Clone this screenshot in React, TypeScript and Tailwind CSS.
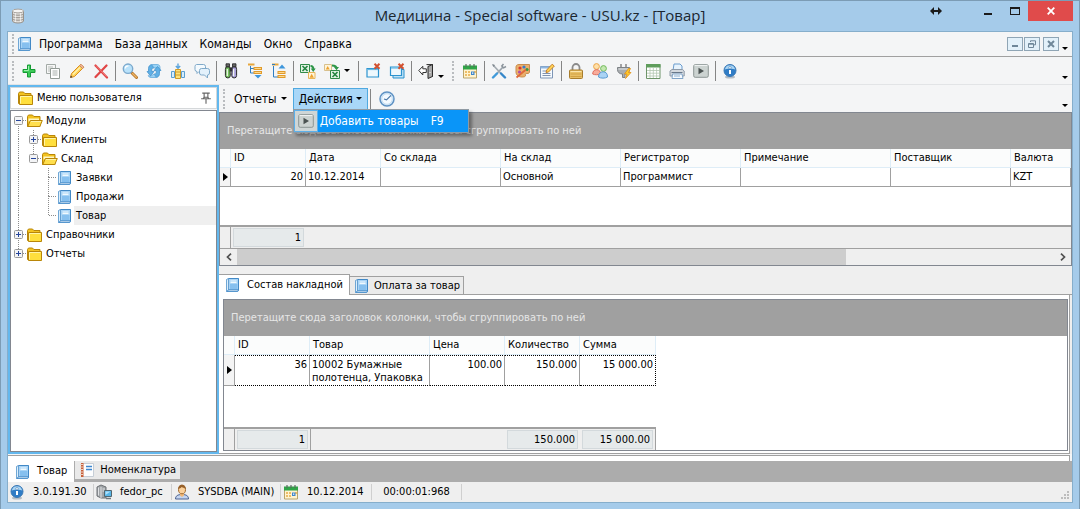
import type { ReactNode } from "react";

const titleFont = 'font-["Open_Sans","Noto_Sans",sans-serif]';
const gridFont = 'font-["DejaVu_Sans_Condensed","Noto_Sans",sans-serif]';

function Icon({ children, size = "size-4" }: { children: ReactNode; size?: string }) {
  return (
    <svg viewBox="0 0 16 16" className={`${size} shrink-0`} fill="none" aria-hidden="true">
      {children}
    </svg>
  );
}

const DatabaseIcon = () => (
  <Icon>
    <path d="M2.500 3v10c0 1 2.500 2 5.500 2s5.500-1 5.500-2V3z" fill="#dedbd7" stroke="#97928c" />
    <ellipse cx="8" cy="3" rx="5.500" ry="1.900" fill="#f6f4f2" stroke="#a8a49f" />
    <path d="M2.500 6c1 1.600 10 1.600 11 0M2.500 8.500c1 1.600 10 1.600 11 0M2.500 11c1 1.600 10 1.600 11 0" stroke="#97928c" />
    <path d="M5.500 5v9M10.500 5v9" stroke="#fff" opacity=".6" />
  </Icon>
);

const BookIcon = () => (
  <Icon>
    <path d="M3 1.500h11v12L12.500 15H1.500V2.500z" fill="#5b9fda" />
    <path d="M3.500 1.500h10v11.500h-10z" fill="#a9d4f6" stroke="#4289c6" />
    <path d="M1.500 2.500l2-1v11.500l-2 1.500z" fill="#dceffc" stroke="#5a98cd" strokeWidth=".8" />
    <path d="M2 14.500l1.500-1.500h10l-1 1.500z" fill="#f2f9fe" stroke="#4289c6" strokeWidth=".8" />
    <path d="M5.500 4h6M5.500 5.500h6" stroke="#f0f9fe" />
    <path d="M5 7h7.500v5H5z" fill="#86c0ef" />
  </Icon>
);

const PlusIcon = () => (
  <Icon>
    <path d="M6.500 2h3v4.500H14v3H9.500V14h-3V9.500H2v-3h4.500z" fill="#3ccb58" stroke="#149a33" strokeLinejoin="round" />
    <path d="M7.500 3v4.500H3" stroke="#9cf0ab" />
  </Icon>
);

const CopyIcon = () => (
  <Icon>
    <path d="M1.500 1.500h9v9h-9z" fill="#f6f6f6" stroke="#a3aaa6" />
    <path d="M3 4h5M3 6h2M3 8h2" stroke="#b7bdb9" />
    <path d="M5.500 5.500h9v10h-9z" fill="#fff" stroke="#929a95" />
    <path d="M7.500 8h5M7.500 10h5M7.500 12h5" stroke="#a8afab" />
  </Icon>
);

const PencilIcon = () => (
  <Icon>
    <path d="M1.500 14.500l1-4L11.500 1.500l3 3L5.500 13.500z" fill="#fcd45a" stroke="#dc8c1f" strokeLinejoin="round" />
    <path d="M10.500 2.500l1.500-1.300 3 3-1.500 1.300z" fill="#f0b8a0" stroke="#cf8e5c" />
    <path d="M4 11.500l7-7" stroke="#fff2b0" strokeWidth="1.200" />
    <path d="M1.200 14.800l.6-2.300 1.700 1.700z" fill="#3a3a3a" />
  </Icon>
);

const DeleteIcon = () => (
  <Icon>
    <path d="M2.500 2.500l11.500 12M13.500 2.500l-11 11.500" stroke="#e04545" strokeWidth="2.200" strokeLinecap="round" />
    <path d="M3 2.500l10.500 11" stroke="#f79090" strokeWidth=".7" />
  </Icon>
);

const SearchIcon = () => (
  <Icon>
    <path d="M10 10l4.500 4.500" stroke="#b5762d" strokeWidth="3" strokeLinecap="round" />
    <path d="M10.500 10.500l3.800 3.800" stroke="#efb564" strokeWidth="1.300" strokeLinecap="round" />
    <circle cx="6" cy="5.700" r="4.700" fill="#b9e2fb" stroke="#7ba9cd" strokeWidth="1.400" />
    <path d="M3.300 5.500c0-2 1.500-2.700 3.200-2.700" stroke="#fff" strokeWidth="1.300" />
  </Icon>
);

const RefreshIcon = () => (
  <Icon>
    <path d="M1 8.500l3.500 4.500L8 8.500H5.800V6.500c0-1 .7-1.500 2.200-1.500L5.500 1.500C3.500 2 2.500 3.500 2.500 5.500v3z" fill="#5fb0e6" stroke="#3c8dc8" strokeWidth=".7" />
    <path d="M6 1.500h5c2 0 3 1 3 3V7l-3-.5V5H8z" fill="#9ad3f5" stroke="#5aa4d8" strokeWidth=".7" />
    <path d="M15 7.500L11.500 3.500 8 7.500h2.200v2c0 1-.7 1.500-2.200 1.500l2.500 3.500c2-.5 3-2 3-4v-3z" fill="#5fb0e6" stroke="#3c8dc8" strokeWidth=".7" />
    <path d="M10 14.500H5c-1.500 0-2.500-.8-2.800-2l2.300.8L8 11z" fill="#9ad3f5" stroke="#5aa4d8" strokeWidth=".7" />
  </Icon>
);

const AlignIcon = () => (
  <Icon>
    <path d="M8 .5v5M5.800 3L8 5.200 10.200 3" stroke="#5aa4dc" strokeWidth="1.400" />
    <path d="M1.500 8.500h3v6h-3zM11.500 8.500h3v6h-3z" fill="#d6ecfb" stroke="#5a9fd1" />
    <path d="M5.500 6.500h5v9h-5z" fill="#ffe27a" stroke="#cf9b28" />
    <path d="M5.500 9h5M5.500 12h5" stroke="#cf9b28" />
  </Icon>
);

const ChatIcon = () => (
  <Icon>
    <path d="M2.500 1.500h7a2 2 0 0 1 2 2v3a2 2 0 0 1-2 2H5l-2 2v-2a2 2 0 0 1-2-2v-3a2 2 0 0 1 1.500-2z" fill="#f4fafe" stroke="#7fa9c9" />
    <path d="M7.500 5.500h6a2 2 0 0 1 2 2v2.500a2 2 0 0 1-2 2v3l-3-3h-3a2 2 0 0 1-2-2V7.500a2 2 0 0 1 2-2z" fill="#e3f1fb" stroke="#7fa9c9" />
  </Icon>
);

const BinocularsIcon = () => (
  <Icon>
    <path d="M3 .8h3.500v3H3zM9.500 .8H13v3H9.500z" fill="#666" stroke="#222" strokeWidth=".8" />
    <path d="M5 4.500h6v4H5z" fill="#333" />
    <path d="M3 4h3.800l.5 8.500a2.400 2.400 0 0 1-4.900 0V6.500z" fill="#74c05e" stroke="#2b2b2b" />
    <path d="M13 4H9.200l-.5 8.500a2.400 2.400 0 0 0 4.900 0V6.500z" fill="#a9a0dc" stroke="#2b2b2b" />
    <path d="M4.300 6v7M10.600 6v7" stroke="#f2f8ef" strokeWidth="1.200" />
  </Icon>
);

const TreeLines = ({ up = false }: { up?: boolean }) => (
  <Icon>
    <path d="M1 1.500h6.500" stroke="#e7a63c" strokeWidth="2" />
    {up ? (
      <>
        <path d="M2.500 3v11H7M1 1.500h3" stroke="#2f7fc4" />
        <path d="M6.500 9.500h8M6.500 13.500h8" stroke="#e09b2c" strokeWidth="3" />
        <path d="M7.500 9.500h6M7.500 13.500h6" stroke="#ffd98c" />
        <path d="M11 1.500l3.500 4h-7z" fill="#3f97dc" />
      </>
    ) : (
      <>
        <path d="M3.500 3v7H7M3.500 5.500H7" stroke="#2f7fc4" />
        <path d="M6.500 5.500h8.500M6.500 9.500h8.500" stroke="#e09b2c" strokeWidth="3" />
        <path d="M7.500 5.500h6.500M7.500 9.500h6.500" stroke="#ffd98c" />
        <path d="M11 15.500l3.500-3.500h-7z" fill="#3f97dc" />
      </>
    )}
  </Icon>
);

const ExcelOutIcon = () => (
  <Icon>
    <path d="M.5 1.500h9v8h-9z" fill="#e3f3e5" stroke="#318a48" />
    <path d="M2.500 3l5 5M7.500 3l-5 5" stroke="#258541" strokeWidth="1.600" />
    <path d="M10.500 3c2 0 3 .8 3 4" stroke="#2e9648" strokeWidth="2" />
    <path d="M10.700 5.500h5L13.200 9z" fill="#2e9648" />
    <path d="M8.500 9.500h6.500v6H8.500z" fill="#fff4da" stroke="#e8b65a" />
    <path d="M9.500 14.800l2.200-4 2.200 4z" fill="#eda32e" />
  </Icon>
);

const ExcelInIcon = () => (
  <Icon>
    <path d="M.5 1.500h7v6h-7z" fill="#fff4da" stroke="#d8c08c" />
    <path d="M1.700 6.500l2-3.500 2 3.500z" fill="#eda32e" />
    <path d="M8 2.500c2.800 0 4.500.8 4.500 3" stroke="#2e9648" strokeWidth="2" />
    <path d="M10 4h5l-2.500 3.200z" fill="#2e9648" />
    <path d="M6.500 7.500h9v8h-9z" fill="#e3f3e5" stroke="#318a48" />
    <path d="M8.500 9l5 5M13.500 9l-5 5" stroke="#258541" strokeWidth="1.600" />
  </Icon>
);

const CloseWindowIcon = ({ stacked = false }: { stacked?: boolean }) => (
  <Icon>
    {stacked && <path d="M4 6.500h11v8.500H4z" fill="#bfe2f6" stroke="#2b93cf" />}
    <path d={stacked ? "M1.500 4h11v8.500h-11z" : "M2 5.500h11.500v8.500H2z"} fill="#eef8fd" stroke="#2b93cf" strokeWidth="1.200" />
    <path d={stacked ? "M2 5h10" : "M2.500 6.500H13"} stroke="#65b9e6" strokeWidth="1.200" />
    <path d="M9.500.8l5 5M14.500.8l-5 5" stroke="#d2502f" strokeWidth="2" />
  </Icon>
);

const ExitIcon = () => (
  <Icon>
    <path d="M8.500 1.500h6v12h-3" fill="#ddd" stroke="#3b3b3b" />
    <path d="M10 3.500l4.500-2v12l-4.500 2z" fill="#a8a8a8" stroke="#2b2b2b" />
    <path d="M.8 7.500l4-4.200v2.500h3.500v3.700H4.800v2.500z" fill="#fff" stroke="#333" />
    <path d="M12 9v1" stroke="#fff" />
  </Icon>
);

const CalendarIcon = () => (
  <Icon>
    <path d="M1.500 3.500h13v11.500h-13z" fill="#fff3cf" stroke="#b9a46a" />
    <path d="M1 2.500h14v4H1z" fill="#2fa447" />
    <path d="M4 1v3M8 1v3M12 1v3" stroke="#5d6a60" strokeWidth="1.200" />
    <path d="M3 8h2v2H3zM6 8h2v2H6zM3 11h2v2H3zM6 11h2v2H6zM12 8h2v2h-2z" fill="#edbd67" />
    <path d="M9 8.500h3.500v3.500H9z" fill="#3f86cc" />
    <path d="M10 9.500h1.300v1.300H10z" fill="#fff" />
  </Icon>
);

const ToolsIcon = () => (
  <Icon>
    <path d="M12 4l-7 7.500" stroke="#9aa3ab" strokeWidth="1.800" />
    <path d="M12.500 1L10.800 3l1.800 1.800L15 3.500" stroke="#8b949c" strokeWidth="1.500" />
    <path d="M2 2l8 8.500" stroke="#a2a9af" strokeWidth="1.600" />
    <path d="M1 1l3 1-1.500 2z" fill="#7f878e" />
    <path d="M10 10.500l4 4" stroke="#3587c9" strokeWidth="2.400" strokeLinecap="round" />
    <path d="M6 10.500l-4 4" stroke="#3f9ada" strokeWidth="2.400" strokeLinecap="round" />
  </Icon>
);

const PaletteIcon = () => (
  <Icon>
    <path d="M1 4c0-1.500 1-2.500 3-2.500h10.500V9c0 1-1 1.500-2.500 1.500s-2 .5-1.500 1.700c.4 1.200-1 1.800-3.500 1.800C3.500 14 1 12 1 9z" fill="#eab06c" stroke="#c98d4e" />
    <circle cx="5" cy="5" r="1.600" fill="#d8392f" />
    <circle cx="9" cy="4" r="1.600" fill="#3a79c9" />
    <circle cx="12" cy="6.500" r="1.600" fill="#2d9a46" />
    <circle cx="4.500" cy="9" r="1.600" fill="#b04fa8" />
    <path d="M1.500 14.500l9.500-8" stroke="#e0683a" strokeWidth="1.800" />
  </Icon>
);

const NoteEditIcon = () => (
  <Icon>
    <path d="M1.500 3.500h12v11.500h-12z" fill="#f5fafe" stroke="#7d95b5" />
    <path d="M1.500 3.500h12v2h-12z" fill="#8fb6e0" />
    <path d="M3.500 8h5M3.500 10.500h8M3.500 12.500h8" stroke="#8093b0" />
    <path d="M7 9.500l.7-2.500L13.200 1.200l2.100 1.900L9.500 9z" fill="#ffd255" stroke="#c7812a" />
  </Icon>
);

const LockIcon = () => (
  <Icon>
    <path d="M4.500 7.500V4.500a3.500 3.500 0 0 1 7 0v3" stroke="#8b8b8b" strokeWidth="1.800" />
    <rect x="1.500" y="7" width="13" height="8.500" rx="1" fill="#e8c067" stroke="#a87d2d" />
    <path d="M2.500 8.500h11" stroke="#fbe6ae" />
    <path d="M2.500 11h11M2.500 13.500h11" stroke="#d2a244" />
  </Icon>
);

const UsersIcon = () => (
  <Icon>
    <circle cx="4.500" cy="3.500" r="2.900" fill="#ffe0a8" stroke="#eaa64c" />
    <path d="M.7 11c0-2.800 1.500-4.300 4-4.300s3.800 1.500 3.800 4.300c-2 1-6 1-7.800 0z" fill="#f8ac9b" stroke="#df7060" />
    <circle cx="11.500" cy="5.500" r="2.900" fill="#c4e8b0" stroke="#71ba5c" />
    <path d="M6.500 14c0-3.500 2-5.200 4.700-5.200s4.300 1.700 4.300 5.200c-2 1.500-7 1.500-9 0z" fill="#aad3f4" stroke="#5b9bd2" />
  </Icon>
);

const PlugIcon = () => (
  <Icon>
    <path d="M5 1v4M10 1v4" stroke="#8e8e8e" strokeWidth="1.600" />
    <path d="M1.500 4.500h12v2c0 2.800-2 4.500-4.500 4.500V14.500H6.500V11c-3 0-5-1.700-5-4.500z" fill="#a9adb0" stroke="#7d8286" />
    <path d="M2.500 6h10" stroke="#e2e4e5" />
    <path d="M12.500 5.500l-4 5.500h2.500l-1.500 4.500 5.500-6h-2.500l2-4z" fill="#ffc928" stroke="#e08e17" strokeWidth=".8" />
  </Icon>
);

const SheetIcon = () => (
  <Icon>
    <path d="M1.500 1.500h13.500v14H1.500z" fill="#fff" stroke="#6d9468" />
    <path d="M1 1h14.500v3.500H1z" fill="#5f9d5c" />
    <path d="M2 7.500h13M2 10.200h13M2 13h13M5 5v10M8.300 5v10M11.600 5v10" stroke="#b3c6b0" strokeWidth=".8" />
  </Icon>
);

const PrinterIcon = () => (
  <Icon>
    <path d="M4 7.500L5 1h6l2 2v4.500z" fill="#e7f3fd" stroke="#6b9cce" />
    <path d="M1 8l2-1.500h10.500L15.200 8v5H1z" fill="#d4d9df" stroke="#8e9aa8" />
    <path d="M2.500 9.500h11" stroke="#68788a" />
    <path d="M3.500 11h9.500l1 4.500h-11z" fill="#f7fbff" stroke="#82a5c8" />
    <path d="M5 13h6" stroke="#8fb0d0" />
  </Icon>
);

const PlayIcon = () => (
  <Icon>
    <rect x=".7" y="1.700" width="14.600" height="12.600" rx="1.500" fill="#ccd3d1" stroke="#8c9694" />
    <path d="M1.500 2.500h13" stroke="#eef1f1" />
    <path d="M5.500 4.700L11 8l-5.500 3.300z" fill="#4b5352" />
  </Icon>
);

const InfoIcon = () => (
  <Icon>
    <ellipse cx="8" cy="14" rx="5" ry="1.500" fill="#b3bcc5" />
    <circle cx="8" cy="7.500" r="6" fill="#2f7cc6" stroke="#3a78b4" />
    <path d="M2.800 6.500a5.300 5.300 0 0 1 10.400 0c-1.500-1-9-1-10.400 0z" fill="#a9d4f3" />
    <circle cx="8" cy="4.700" r="1.200" fill="#fff" stroke="#2a6aa8" strokeWidth=".5" />
    <path d="M7 7h2v4H7z" fill="#fff" />
  </Icon>
);

const ClockIcon = () => (
  <Icon>
    <circle cx="8" cy="8" r="7" fill="#dceefb" stroke="#5f92c4" strokeWidth="1.500" />
    <circle cx="8" cy="8" r="5.300" fill="#f4faff" stroke="#b9d6ee" strokeWidth=".8" />
    <path d="M12 4.300L7.500 8.800 5 8" stroke="#4a79a8" strokeWidth="1.200" />
  </Icon>
);

const FolderIcon = ({ open = false }: { open?: boolean }) => (
  <Icon>
    <path d="M.5 3.500l1-1.500h4l1.300 1.500h6.200v10H.5z" fill="#f3c31f" stroke="#b98609" />
    {open ? (
      <>
        <path d="M1.500 5.500H12v3H1.500z" fill="#fff6c4" />
        <path d="M.8 13.500l2.500-6h12l-2.500 6z" fill="#ffdf4d" stroke="#b98609" strokeLinejoin="round" />
        <path d="M4 8.500h10" stroke="#fff3a6" />
      </>
    ) : (
      <>
        <path d="M1.500 14.500V5.500h13v9z" fill="#ffdf3d" stroke="#b98609" />
        <path d="M2.500 6.500h11M2.500 6.500v7" stroke="#fff5a8" />
      </>
    )}
  </Icon>
);

const NotebookIcon = () => (
  <Icon>
    <path d="M2.500 1.500h12v13h-12z" fill="#fcfdfe" stroke="#c6ced7" />
    <path d="M2 1h2.500v14H2z" fill="#c8603a" />
    <path d="M1 2.500h3M1 5h3M1 7.500h3M1 10h3M1 12.500h3" stroke="#ecd3c6" />
    <path d="M7 4.500h6M7 7.500h6" stroke="#3c87cf" strokeWidth="1.600" />
  </Icon>
);

const ServerIcon = () => (
  <Icon>
    <path d="M1 3l4-2 5 2v11H5l-4-2z" fill="#a1a5a8" stroke="#6d7174" />
    <path d="M5 3v11M6.500 5h2.500M6.500 7h2.500M2.500 3.500v8" stroke="#e0e2e4" />
    <path d="M8.500 6.500h7v6h-7z" fill="#57b6e8" stroke="#52666f" />
    <path d="M9.500 7.500h5L9.500 11z" fill="#aee0fa" />
    <path d="M10 14.500h5" stroke="#6d7a80" strokeWidth="1.500" />
  </Icon>
);

const UserIcon = () => (
  <Icon>
    <path d="M1.500 15c0-3 2-4.500 6.500-4.500s6.500 1.500 6.500 4.500z" fill="#c3d4f0" stroke="#4d6391" />
    <path d="M6 9.500h4v2l-2 1.500-2-1.500z" fill="#f0b778" />
    <ellipse cx="8" cy="5.500" rx="3.500" ry="4.300" fill="#fbd09a" stroke="#a06a30" />
    <path d="M4.300 5c0-6 7.500-5.500 7.400 0-1.500-1-3-1.500-4-2-1 1-2 1.500-3.400 2z" fill="#96602a" />
  </Icon>
);

const PinIcon = () => (
  <Icon size="size-3">
    <path d="M3 1.500h10M5.500 2v6M10.500 2v6M1.500 9h13M4.500 8.500l1-1.500h5l1 1.500M8 9v6.500" stroke="#666" strokeWidth="1.500" />
  </Icon>
);

const Caret = () => (
  <svg viewBox="0 0 6 3" className="h-[3px] w-1.5 shrink-0" aria-hidden="true">
    <path d="M0 0h6L3 3z" fill="#000" />
  </svg>
);

const Grip = () => <span className="h-5 w-0.5 shrink-0 border-l-2 border-dotted border-[#b9bcbf]" />;

const Separator = () => (
  <span className="flex h-5 w-[5px] shrink-0 justify-center">
    <span className="w-px bg-[#858585]" />
  </span>
);

type Tool = { label: string; icon: ReactNode };

const toolGroups: Tool[][] = [
  [
    { label: "Добавить", icon: <PlusIcon /> },
    { label: "Копировать", icon: <CopyIcon /> },
    { label: "Изменить", icon: <PencilIcon /> },
    { label: "Удалить", icon: <DeleteIcon /> },
  ],
  [
    { label: "Поиск", icon: <SearchIcon /> },
    { label: "Обновить", icon: <RefreshIcon /> },
    { label: "Ширина колонок", icon: <AlignIcon /> },
    { label: "Сообщения", icon: <ChatIcon /> },
  ],
  [
    { label: "Найти", icon: <BinocularsIcon /> },
    { label: "Развернуть", icon: <TreeLines /> },
    { label: "Свернуть", icon: <TreeLines up /> },
  ],
];

const settingsGroups: Tool[][] = [
  [{ label: "Календарь", icon: <CalendarIcon /> }],
  [
    { label: "Настройки", icon: <ToolsIcon /> },
    { label: "Оформление", icon: <PaletteIcon /> },
    { label: "Заметки", icon: <NoteEditIcon /> },
  ],
  [
    { label: "Блокировка", icon: <LockIcon /> },
    { label: "Пользователи", icon: <UsersIcon /> },
    { label: "Подключение", icon: <PlugIcon /> },
  ],
  [
    { label: "Таблица", icon: <SheetIcon /> },
    { label: "Печать", icon: <PrinterIcon /> },
    { label: "Запуск", icon: <PlayIcon /> },
  ],
  [{ label: "О программе", icon: <InfoIcon /> }],
];

const ToolButton = ({ label, icon }: Tool) => (
  <button type="button" aria-label={label} className="flex size-6 shrink-0 items-center justify-center">
    {icon}
  </button>
);

const ToolGroups = ({ groups }: { groups: Tool[][] }) => (
  <>
    {groups.map((group, i) => (
      <div key={group[0].label} className="flex items-center">
        {i > 0 && <Separator />}
        {group.map((tool) => (
          <ToolButton key={tool.label} {...tool} />
        ))}
      </div>
    ))}
  </>
);

function TitleBar() {
  return (
    <header className="grid h-[30px] grid-cols-[1fr_auto_1fr]">
      <div className="flex items-center pl-[3px]">
        <DatabaseIcon />
      </div>
      <h1 className={`${titleFont} text-[15px] leading-[29px] text-[#1c2730]`}>
        Медицина - Special software - USU.kz - [Товар]
      </h1>
      <div className="flex items-start justify-end">
        <button type="button" aria-label="Переместить" className="mr-6 flex h-5 w-[30px] items-center justify-center">
          <svg viewBox="0 0 12 8" className="h-2 w-3">
            <path d="M0 4l4-4v3h4V0l4 4-4 4V5H4v3z" fill="#1b1b1b" />
          </svg>
        </button>
        <button type="button" aria-label="Свернуть окно" className="flex h-5 w-[26px] items-center justify-center pt-1.5">
          <span className="h-0.5 w-2 bg-[#1b1b1b]" />
        </button>
        <button type="button" aria-label="Развернуть окно" className="flex h-5 w-[27px] items-center justify-center">
          <span className="h-2 w-2.5 border border-t-2 border-[#1b1b1b]" />
        </button>
        <button type="button" aria-label="Закрыть окно" className="flex h-5 w-[45px] items-center justify-center bg-[#e04b4b]">
          <svg viewBox="0 0 8 8" className="size-2">
            <path d="M.7.7l6.600 6.600M7.300.7L.7 7.300" stroke="#fff" strokeWidth="1.800" />
          </svg>
        </button>
      </div>
    </header>
  );
}

const mdiButton = "flex h-3.5 w-4 items-center justify-center border border-[#8fa5b5] bg-[#e3f1fa]";

function MenuBar() {
  return (
    <nav className="flex h-[25px] items-center border-b border-[#a0a0a0] pl-1">
      <Grip />
      <span className="ml-[3px]">
        <BookIcon />
      </span>
      {["Программа", "База данных", "Команды", "Окно", "Справка"].map((item) => (
        <button key={item} type="button" className={`${gridFont} px-1.5 text-xs text-black`}>
          {item}
        </button>
      ))}
      <div className="ml-auto flex items-center pr-1">
        <button type="button" aria-label="Свернуть" className={mdiButton}>
          <span className="mt-1 h-0.5 w-1.5 bg-[#6f8799]" />
        </button>
        <button type="button" aria-label="Восстановить" className={`${mdiButton} ml-px`}>
          <svg viewBox="0 0 8 8" className="size-2" fill="none" stroke="#6f8799">
            <path d="M2.500 2V.8h5v4H6M.5 3.500h5v4h-5zM.5 4.200h5" />
          </svg>
        </button>
        <button type="button" aria-label="Закрыть" className={`${mdiButton} ml-[3px] mr-[3px]`}>
          <svg viewBox="0 0 8 8" className="size-2">
            <path d="M1 1l6 6M7 1L1 7" stroke="#6f8799" strokeWidth="2" />
          </svg>
        </button>
        <span className="pt-2">
          <Caret />
        </span>
      </div>
    </nav>
  );
}

function ToolBar() {
  return (
    <div className="flex h-7 items-center border-b border-[#e2e4e6] pl-1">
      <Grip />
      <div className="flex items-center pl-[3px]">
        <ToolGroups groups={toolGroups} />
        <Separator />
        <ToolButton label="Экспорт" icon={<ExcelOutIcon />} />
        <ToolButton label="Импорт" icon={<ExcelInIcon />} />
        <button type="button" aria-label="Варианты импорта" className="flex h-6 w-3 items-center">
          <Caret />
        </button>
        <Separator />
        <ToolButton label="Закрыть вкладку" icon={<CloseWindowIcon />} />
        <ToolButton label="Закрыть все вкладки" icon={<CloseWindowIcon stacked />} />
        <Separator />
        <ToolButton label="Выход" icon={<ExitIcon />} />
        <span className="pr-2 pt-3">
          <Caret />
        </span>
        <Grip />
        <span className="w-1" />
        <ToolGroups groups={settingsGroups} />
      </div>
      <span className="ml-auto pr-1 pt-3.5">
        <Caret />
      </span>
    </div>
  );
}

type Cell = "line" | "blank" | "tee" | "elbow" | "plus" | "plus-end" | "minus-root" | "minus-end";

function TreeCell({ kind }: { kind: Cell }) {
  const expander = kind.startsWith("plus") || kind.startsWith("minus");
  const above = !["blank", "minus-root"].includes(kind);
  const below = !["blank", "elbow", "plus-end", "minus-end"].includes(kind);
  return (
    <svg viewBox="0 0 15 19" className="h-[19px] w-[15px] shrink-0" fill="none" aria-hidden="true">
      {above && <path d="M7.500 0v9.500" stroke="#8c8c8c" strokeDasharray="1 1" />}
      {below && <path d="M7.500 9v10" stroke="#8c8c8c" strokeDasharray="1 1" />}
      {kind !== "line" && kind !== "blank" && <path d="M8 9.500h7" stroke="#8c8c8c" strokeDasharray="1 1" />}
      {expander && (
        <>
          <rect x="3.500" y="5.500" width="8" height="8" rx="1" fill="#f3f4f6" stroke="#9a9a9a" />
          <path d={kind.startsWith("plus") ? "M5 9.500h5M7.500 7v5" : "M5 9.500h5"} stroke="#25459c" />
        </>
      )}
    </svg>
  );
}

const treeRows: { label: string; cells: Cell[]; icon: "open" | "closed" | "book"; selected?: boolean }[] = [
  { label: "Модули", cells: ["minus-root"], icon: "open" },
  { label: "Клиенты", cells: ["line", "plus"], icon: "closed" },
  { label: "Склад", cells: ["line", "minus-end"], icon: "open" },
  { label: "Заявки", cells: ["line", "blank", "tee"], icon: "book" },
  { label: "Продажи", cells: ["line", "blank", "tee"], icon: "book" },
  { label: "Товар", cells: ["line", "blank", "elbow"], icon: "book", selected: true },
  { label: "Справочники", cells: ["plus"], icon: "closed" },
  { label: "Отчеты", cells: ["plus-end"], icon: "closed" },
];

function SidePanel() {
  return (
    <aside className="flex w-[211px] shrink-0 flex-col border-2 border-[#63b8ee] bg-[#f4f5f7]">
      <div className="mb-px flex h-[22px] items-center border border-[#d5d8da] bg-white pl-[7px] pr-1">
        <FolderIcon />
        <h2 className={`${gridFont} ml-[3px] flex-1 text-[11px]`}>Меню пользователя</h2>
        <button type="button" aria-label="Закрепить панель">
          <PinIcon />
        </button>
      </div>
      <ul role="tree" className="flex-1 border border-[#828790] bg-white">
        {treeRows.map((row) => (
          <li key={row.label} role="treeitem" aria-level={row.cells.length} aria-selected={!!row.selected}>
            <button type="button" className="flex h-[19px] w-full items-center text-left">
              {row.cells.map((cell, i) => (
                <TreeCell key={i} kind={cell} />
              ))}
              <span className="mx-px">{row.icon === "book" ? <BookIcon /> : <FolderIcon open={row.icon === "open"} />}</span>
              <span
                className={`${gridFont} flex-1 pl-0.5 text-[11px] leading-[19px] ${row.selected ? "bg-[#efefef]" : ""}`}
              >
                {row.label}
              </span>
            </button>
          </li>
        ))}
      </ul>
    </aside>
  );
}

function ActionBar() {
  return (
    <div className="flex h-[27px] items-center bg-[#f4f5f6] pl-1">
      <Grip />
      <button type="button" className={`${gridFont} ml-[3px] flex h-[22px] items-center gap-1 px-1.5 text-xs`}>
        Отчеты
        <Caret />
      </button>
      <div className="relative">
        <button
          type="button"
          aria-expanded="true"
          className={`${gridFont} flex h-[22px] items-center gap-[3px] border border-[#4fa9e0] bg-[#a9d7f8] px-[5px] text-xs`}
        >
          Действия
          <Caret />
        </button>
        <div
          role="menu"
          className="absolute left-0 top-[21px] z-10 border border-[#8f9aa3] bg-[#f4f5f6] shadow-[3px_3px_3px_rgba(0,0,0,0.35)]"
        >
          <button
            type="button"
            role="menuitem"
            className={`${gridFont} flex h-[22px] items-center whitespace-nowrap bg-[#0a95f8] pr-6 text-xs text-white`}
          >
            <span className="mr-0.5 flex h-[22px] w-6 items-center justify-center border border-[#5cb0ea] bg-[#cfd6d6]">
              <PlayIcon />
            </span>
            Добавить товары
            <kbd className={`${gridFont} ml-3`}>F9</kbd>
          </button>
        </div>
      </div>
      <Separator />
      <span className="pl-0.5">
        <ToolButton label="Время" icon={<ClockIcon />} />
      </span>
      <span className="ml-auto pr-1 pt-3.5">
        <Caret />
      </span>
    </div>
  );
}

const GroupBar = () => (
  <div className={`${gridFont} flex h-9 shrink-0 items-center bg-[#a0a0a0] pl-[7px] text-[11px] text-[#e6e6e6]`}>
    Перетащите сюда заголовок колонки, чтобы сгруппировать по ней
  </div>
);

const RowMarker = () => (
  <svg viewBox="0 0 5 8" className="mx-auto h-2 w-[5px]" role="img" aria-label="Текущая строка">
    <path d="M0 0l5 4-5 4z" fill="#000" />
  </svg>
);

const headCell = "h-[19px] border-b border-r border-[#deedf7] bg-[#fbfcfc] p-0 pl-[3px] text-left font-normal";
const bodyCell = "h-[19px] border-b border-r border-[#a0a0a0] p-0 px-0.5";
const footCell = "h-[23px] border-t-2 border-[#a0a0a0] bg-[#efefef] p-0";

const FooterValue = ({ children }: { children: ReactNode }) => (
  <div className="mx-0.5 h-[19px] border border-[#d3d9dc] bg-[#e6eaeb] pr-0.5 text-right leading-[17px]">{children}</div>
);

const receiptColumns = ["ID", "Дата", "Со склада", "На склад", "Регистратор", "Примечание", "Поставщик", "Валюта"];
const receiptRow = ["20", "10.12.2014", "", "Основной", "Программист", "", "", "KZT"];

function ReceiptsGrid() {
  return (
    <section className="border border-[#828790] bg-white">
      <GroupBar />
      <table className={`${gridFont} w-full table-fixed border-separate border-spacing-0 text-[11px] leading-[18px]`}>
        <colgroup>
          <col className="w-[11px]" />
          <col className="w-[75px]" />
          <col className="w-[75px]" />
          <col className="w-[120px]" />
          <col className="w-[120px]" />
          <col className="w-[120px]" />
          <col className="w-[150px]" />
          <col className="w-[120px]" />
          <col />
        </colgroup>
        <thead>
          <tr>
            <td className={headCell} />
            {receiptColumns.map((c) => (
              <th key={c} scope="col" className={headCell}>
                {c}
              </th>
            ))}
          </tr>
        </thead>
        <tbody>
          <tr>
            <td className={`${bodyCell} bg-[#f4f4f4]`}>
              <RowMarker />
            </td>
            {receiptRow.map((value, i) => (
              <td key={receiptColumns[i]} className={`${bodyCell} ${i === 0 ? "text-right" : ""}`}>
                {value}
              </td>
            ))}
          </tr>
          <tr>
            <td colSpan={9} className="h-[38px] p-0" />
          </tr>
        </tbody>
        <tfoot>
          <tr>
            <td className={`${footCell} border-r`} />
            <td className={footCell}>
              <FooterValue>1</FooterValue>
            </td>
            <td colSpan={7} className={footCell} />
          </tr>
        </tfoot>
      </table>
      <div className="flex h-[17px] items-center border-t border-[#a0a0a0] bg-[#efefef]">
        <button type="button" aria-label="Прокрутить влево" className="flex h-4 w-[17px] items-center justify-center">
          <svg viewBox="0 0 6 8" className="h-2 w-1.5">
            <path d="M5 .7L1.500 4 5 7.300" fill="none" stroke="#505050" strokeWidth="1.700" />
          </svg>
        </button>
        <div className="h-full flex-1">
          <div className="h-full w-[74.5%] bg-[#cdcdcd]" />
        </div>
        <button type="button" aria-label="Прокрутить вправо" className="flex h-4 w-[17px] items-center justify-center">
          <svg viewBox="0 0 6 8" className="h-2 w-1.5">
            <path d="M1 .7L4.500 4 1 7.300" fill="none" stroke="#505050" strokeWidth="1.700" />
          </svg>
        </button>
      </div>
    </section>
  );
}

const itemColumns = ["ID", "Товар", "Цена", "Количество", "Сумма"];
const itemRow = ["36", "10002 Бумажные полотенца, Упаковка", "100.00", "150.000", "15 000.00"];

function ItemsGrid() {
  return (
    <section className="flex flex-1 flex-col border border-[#828790] bg-white">
      <GroupBar />
      <div className="flex flex-1">
        <table className={`${gridFont} w-[432px] table-fixed border-separate border-spacing-0 text-[11px] leading-[18px]`}>
          <colgroup>
            <col className="w-[11px]" />
            <col className="w-[75px]" />
            <col className="w-[120px]" />
            <col className="w-[75px]" />
            <col className="w-[75px]" />
            <col />
          </colgroup>
          <thead>
            <tr>
              <td className={headCell} />
              {itemColumns.map((c) => (
                <th key={c} scope="col" className={headCell}>
                  {c}
                </th>
              ))}
            </tr>
          </thead>
          <tbody>
            <tr>
              <td className="h-[31px] border-b border-r border-[#a0a0a0] bg-[#f4f4f4] p-0">
                <RowMarker />
              </td>
              {itemRow.map((value, i) => (
                <td
                  key={itemColumns[i]}
                  className={`h-[31px] border-y border-r border-y-black [border-bottom-style:dotted] [border-top-style:dotted] p-0 px-0.5 pt-0.5 align-top leading-[13px] ${
                    i === 1 ? "" : "whitespace-nowrap text-right"
                  } ${i === itemRow.length - 1 ? "border-r-black [border-right-style:dotted]" : "border-r-[#a0a0a0]"}`}
                >
                  {value}
                </td>
              ))}
            </tr>
            <tr>
              <td colSpan={6} className="p-0" />
            </tr>
          </tbody>
          <tfoot>
            <tr>
              <td className={`${footCell} border-r`} />
              <td className={footCell}>
                <FooterValue>1</FooterValue>
              </td>
              <td className={`${footCell} border-l`} />
              <td className={footCell} />
              <td className={footCell}>
                <FooterValue>150.000</FooterValue>
              </td>
              <td className={`${footCell} border-r`}>
                <FooterValue>15 000.00</FooterValue>
              </td>
            </tr>
          </tfoot>
        </table>
      </div>
    </section>
  );
}

function DetailTabs() {
  return (
    <div role="tablist" className={`${gridFont} flex h-[21px] items-end text-[11px]`}>
      <button
        type="button"
        role="tab"
        aria-selected="true"
        className="flex h-[21px] items-center gap-1.5 border-r border-t border-[#a0a0a0] bg-white px-1.5"
      >
        <BookIcon />
        Состав накладной
      </button>
      <button
        type="button"
        role="tab"
        aria-selected="false"
        className="flex h-[19px] items-center gap-1 border-b border-r border-t border-[#a0a0a0] bg-[#ebebeb] pl-1 pr-[3px]"
      >
        <BookIcon />
        <span className="pt-0.5">Оплата за товар</span>
      </button>
      <span className="flex-1 self-end border-b border-[#a0a0a0]" />
    </div>
  );
}

function WindowTabs() {
  return (
    <div role="tablist" className={`${gridFont} flex h-[21px] items-start bg-[#acacac] text-[11px]`}>
      <button type="button" role="tab" aria-selected="true" className="flex h-[21px] items-center gap-1.5 bg-white px-[7px]">
        <BookIcon />
        Товар
      </button>
      <button
        type="button"
        role="tab"
        aria-selected="false"
        className="ml-px flex h-[18px] items-center gap-[5px] bg-[#e9e9e9] px-1"
      >
        <NotebookIcon />
        Номенклатура
      </button>
    </div>
  );
}

function StatusBar() {
  const cell = "flex h-4 items-center gap-2 border-r border-[#cfcfcf]";
  return (
    <footer className={`${gridFont} flex h-5 items-center bg-[#efefef] text-[11px]`}>
      <span className={`${cell} w-[86px] pl-px`}>
        <InfoIcon />
        3.0.191.30
      </span>
      <span className={`${cell} w-[78px] pl-0.5`}>
        <ServerIcon />
        fedor_pc
      </span>
      <span className={`${cell} w-[109px] pl-0.5`}>
        <UserIcon />
        SYSDBA (MAIN)
      </span>
      <span className={`${cell} w-[91px] pl-0.5`}>
        <CalendarIcon />
        10.12.2014
      </span>
      <span className={`${cell} w-[90px] justify-center`}>00:00:01:968</span>
      <svg viewBox="0 0 9 9" className="ml-auto mr-[3px] mt-1.5 size-[9px]" aria-hidden="true">
        <path d="M7 0h2v2H7zM7 3h2v2H7zM4 3h2v2H4zM7 6h2v2H7zM4 6h2v2H4zM1 6h2v2H1z" fill="#bdbdbd" />
      </svg>
    </footer>
  );
}

export default function App() {
  return (
    <div className="flex min-h-screen flex-col border border-b-0 border-[#7c9cb5] bg-[#a5cbea] px-1.5 pb-1.5 text-black">
      <TitleBar />
      <div className="flex flex-1 flex-col border border-[#86aecb] bg-[#f4f5f6]">
        <MenuBar />
        <ToolBar />
        <main className="flex flex-1">
          <SidePanel />
          <div className="flex min-w-0 flex-1 flex-col bg-[#efefef]">
            <ActionBar />
            <ReceiptsGrid />
            <div className="h-2" />
            <DetailTabs />
            <div className="mr-0.5 flex flex-1 flex-col border-b border-r border-[#a0a0a0] bg-white pb-0.5 pl-1 pr-px pt-1">
              <ItemsGrid />
            </div>
          </div>
        </main>
        <div className="mr-0.5 mt-px h-1.5 shrink-0 border-r border-t border-[#a0a0a0] bg-white" />
        <WindowTabs />
        <StatusBar />
      </div>
    </div>
  );
}
